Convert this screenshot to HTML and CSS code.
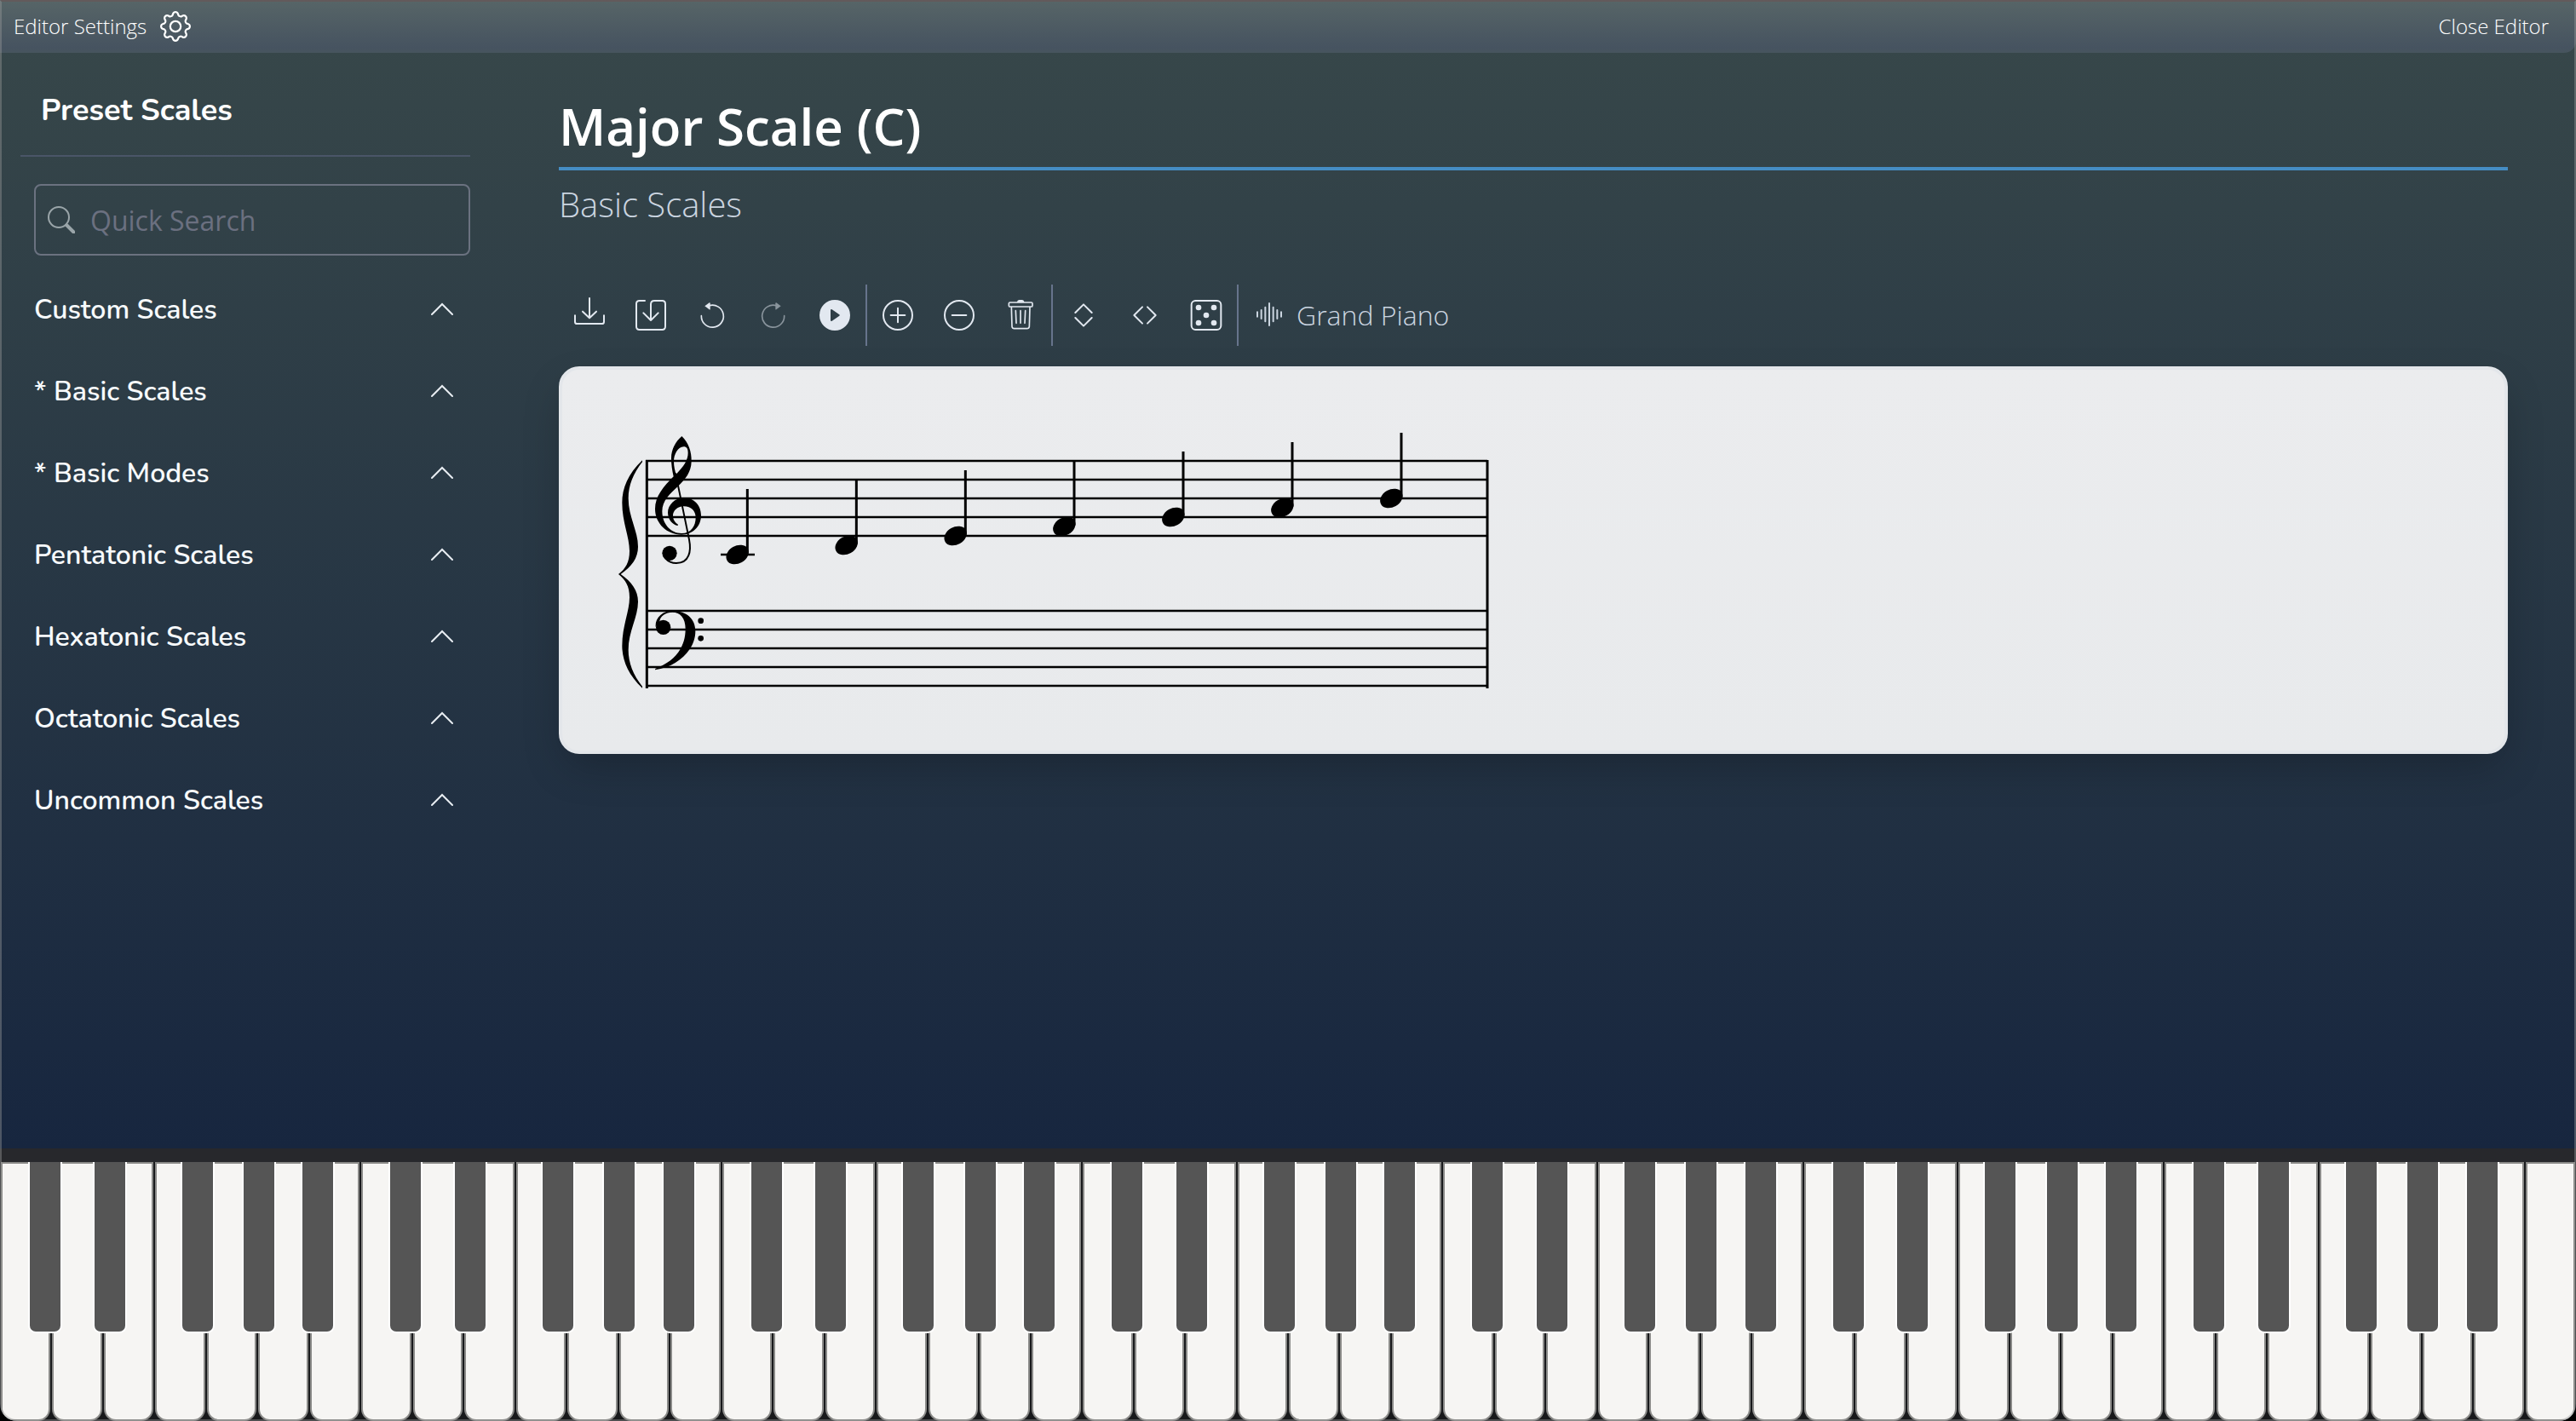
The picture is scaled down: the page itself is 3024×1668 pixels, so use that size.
FILE: index.html
```html
<!DOCTYPE html>
<html lang="en">
<head>
<meta charset="utf-8">
<title>Scale Editor</title>
<link rel="stylesheet" href="styles.css">
</head>
<body>
<div class="app">
  <header class="topbar">
    <button class="topbar-btn" type="button">
      <span>Editor Settings</span>
      <svg class="gear" viewBox="0 0 16 16" aria-hidden="true"><path d="M8 4.754a3.246 3.246 0 1 0 0 6.492 3.246 3.246 0 0 0 0-6.492zM5.754 8a2.246 2.246 0 1 1 4.492 0 2.246 2.246 0 0 1-4.492 0z"/><path d="M9.796 1.343c-.527-1.79-3.065-1.79-3.592 0l-.094.319a.873.873 0 0 1-1.255.52l-.292-.16c-1.64-.892-3.433.902-2.54 2.541l.159.292a.873.873 0 0 1-.52 1.255l-.319.094c-1.79.527-1.79 3.065 0 3.592l.319.094a.873.873 0 0 1 .52 1.255l-.16.292c-.892 1.64.901 3.434 2.541 2.54l.292-.159a.873.873 0 0 1 1.255.52l.094.319c.527 1.79 3.065 1.79 3.592 0l.094-.319a.873.873 0 0 1 1.255-.52l.292.16c1.64.893 3.434-.902 2.54-2.541l-.159-.292a.873.873 0 0 1 .52-1.255l.319-.094c1.79-.527 1.79-3.065 0-3.592l-.319-.094a.873.873 0 0 1-.52-1.255l.16-.292c.893-1.64-.902-3.433-2.541-2.54l-.292.159a.873.873 0 0 1-1.255-.52l-.094-.319zm-2.633.283c.246-.835 1.428-.835 1.674 0l.094.319a1.873 1.873 0 0 0 2.693 1.115l.291-.16c.764-.415 1.6.42 1.184 1.185l-.159.292a1.873 1.873 0 0 0 1.116 2.692l.318.094c.835.246.835 1.428 0 1.674l-.319.094a1.873 1.873 0 0 0-1.115 2.693l.16.291c.415.764-.42 1.6-1.185 1.184l-.291-.159a1.873 1.873 0 0 0-2.693 1.116l-.094.318c-.246.835-1.428.835-1.674 0l-.094-.319a1.873 1.873 0 0 0-2.692-1.115l-.292.16c-.764.415-1.6-.42-1.184-1.185l.159-.291A1.873 1.873 0 0 0 1.945 8.93l-.319-.094c-.835-.246-.835-1.428 0-1.674l.319-.094A1.873 1.873 0 0 0 3.06 4.377l-.16-.292c-.415-.764.42-1.6 1.185-1.184l.292.159a1.873 1.873 0 0 0 2.692-1.115l.094-.319z"/></svg>
    </button>
    <button class="topbar-btn" type="button">Close Editor</button>
  </header>

  <div class="workspace">
    <aside class="sidebar">
      <h2 class="sidebar-title">Preset Scales</h2>
      <div class="search">
        <svg class="search-icon" viewBox="0 0 32 32" aria-hidden="true"><circle cx="13" cy="13" r="12"/><path class="handle" d="M22.500 22.500L30.500 30.500"/></svg>
        <input class="search-input" type="search" placeholder="Quick Search" aria-label="Quick Search">
      </div>
      <nav class="groups" aria-label="Preset scales">
        <button class="group" type="button">Custom Scales<svg class="chevron" viewBox="0 0 26 16" aria-hidden="true"><path d="M1 14L13 2L25 14"/></svg></button>
        <button class="group" type="button">* Basic Scales<svg class="chevron" viewBox="0 0 26 16" aria-hidden="true"><path d="M1 14L13 2L25 14"/></svg></button>
        <button class="group" type="button">* Basic Modes<svg class="chevron" viewBox="0 0 26 16" aria-hidden="true"><path d="M1 14L13 2L25 14"/></svg></button>
        <button class="group" type="button">Pentatonic Scales<svg class="chevron" viewBox="0 0 26 16" aria-hidden="true"><path d="M1 14L13 2L25 14"/></svg></button>
        <button class="group" type="button">Hexatonic Scales<svg class="chevron" viewBox="0 0 26 16" aria-hidden="true"><path d="M1 14L13 2L25 14"/></svg></button>
        <button class="group" type="button">Octatonic Scales<svg class="chevron" viewBox="0 0 26 16" aria-hidden="true"><path d="M1 14L13 2L25 14"/></svg></button>
        <button class="group" type="button">Uncommon Scales<svg class="chevron" viewBox="0 0 26 16" aria-hidden="true"><path d="M1 14L13 2L25 14"/></svg></button>
      </nav>
    </aside>

    <main class="editor">
      <h1 class="title">Major Scale (C)</h1>
      <p class="subtitle">Basic Scales</p>

      <div class="toolbar" role="toolbar" aria-label="Score tools">
        <button class="tool" type="button" aria-label="Download"><svg viewBox="0 0 216 216"><path d="M108 48V117M84 95L108 118L132 95M57 109V131Q57 138 64 138H152Q159 138 159 131V109"/></svg></button>
        <button class="tool" type="button" aria-label="Import"><svg viewBox="0 0 216 216"><path d="M87 57H68Q57 57 57 68V148Q57 159 68 159H148Q159 159 159 148V68Q159 57 148 57H121Q108 57 108 70V126M82 100L108 126L134 100"/></svg></button>
        <button class="tool" type="button" aria-label="Undo"><svg viewBox="0 0 216 216"><path class="thin" d="M70 110A39 39 0 1 0 98 74"/><path class="solid" d="M82 76L98 64Q101 63 101 67V86Q101 90 98 88Z"/></svg></button>
        <button class="tool" type="button" aria-label="Redo" disabled><svg viewBox="0 0 216 216"><path class="thin" d="M146 110A39 39 0 1 1 118 74"/><path class="solid" d="M134 76L118 64Q115 63 115 67V86Q115 90 118 88Z"/></svg></button>
        <button class="tool" type="button" aria-label="Play"><svg viewBox="0 0 216 216"><path class="solid" fill-rule="evenodd" d="M108 54A54 54 0 1 1 108 162A54 54 0 1 1 108 54ZM93 90V126Q94 130 98 128L124 110Q127 108 124 106L98 88Q94 86 93 90Z"/></svg></button>
        <span class="divider"></span>
        <button class="tool" type="button" aria-label="Add note"><svg viewBox="0 0 216 216"><circle cx="108" cy="108" r="51"/><path d="M108 83V133M83 108H133"/></svg></button>
        <button class="tool" type="button" aria-label="Remove note"><svg viewBox="0 0 216 216"><circle cx="108" cy="108" r="51"/><path d="M83 108H133"/></svg></button>
        <button class="tool" type="button" aria-label="Delete all"><svg viewBox="0 0 216 216"><path class="thin" d="M71 63H146Q150 63 150 67V74Q150 78 146 78H71Q67 78 67 74V67Q67 63 71 63ZM76 79L78 148Q79 155 86 155H131Q138 155 139 148L141 79M91 92L93 136M108 92V136M125 92L123 136"/><path class="solid" d="M95 63Q97 54 103 54H114Q120 54 122 63Z"/></svg></button>
        <span class="divider"></span>
        <button class="tool" type="button" aria-label="Expand vertically"><svg viewBox="0 0 216 216"><path d="M79 99L108 70L137 99M79 117L108 146L137 117"/></svg></button>
        <button class="tool" type="button" aria-label="Expand horizontally"><svg viewBox="0 0 216 216"><path d="M99 79L70 108L99 137M117 79L146 108L117 137"/></svg></button>
        <button class="tool" type="button" aria-label="Randomize"><svg viewBox="0 0 216 216"><rect x="56" y="57" width="104" height="102" rx="14"/><g class="solid"><circle cx="81" cy="81" r="10"/><circle cx="135" cy="81" r="10"/><circle cx="108" cy="108" r="10"/><circle cx="81" cy="135" r="10"/><circle cx="135" cy="135" r="10"/></g></svg></button>
        <span class="divider"></span>
        <button class="instrument" type="button"><svg viewBox="0 0 96 96" aria-hidden="true"><path d="M6 40V56M20 33V63M34 23V73M48 9V87M62 23V73M76 33V63M90 40V56"/></svg><span>Grand Piano</span></button>
      </div>

      <section class="score" aria-label="Score">
        <svg class="staff" viewBox="0 0 3240 1020" role="img" aria-label="C major scale on a grand staff">
          <defs>
            <g id="note"><ellipse rx="42" ry="31" transform="rotate(-30)"/><path class="stem" d="M35 -4V-231"/></g>
            <path id="brace" d="M162 151C112 198 91 250 91 300C91 370 117 420 117 470C117 510 103 532 78 552L86 552C125 524 147 495 147 455C147 400 113 350 113 285C113 240 130 197 162 157Z"/>
          </defs>
          <path class="line" d="M174 153H3138M174 219H3138M174 285H3138M174 351H3138M174 417H3138M174 681H3138M174 747H3138M174 813H3138M174 879H3138M174 945H3138M438 483H558"/>
          <path class="bar" d="M178 150V954M3138 150V954"/>
          <use href="#brace"/>
          <use href="#brace" transform="translate(0 1104) scale(1 -1)"/>
          <path d="M301 66C325 90 336 120 335 155C334 192 315 216 288 242C260 268 232 292 232 330C232 375 262 408 300 408C335 408 350 380 350 353C350 330 335 313 308 313C285 313 270 330 270 345C270 360 277 370 288 377L287 381C268 378 252 358 252 335C252 308 278 283 308 283C345 283 369 310 369 345C369 385 338 413 300 413C250 413 207 375 207 322C207 278 237 243 272 208C267 185 264 165 264 143C264 112 280 84 301 66ZM281 200C308 172 323 150 323 125C323 110 318 103 308 103C288 103 273 130 273 155C273 172 277 187 281 200Z" fill-rule="evenodd"/>
          <path class="hook" d="M279 196L327 430C335 470 328 513 282 513C264 513 252 506 243 496"/>
          <circle cx="258" cy="478" r="26"/>
          <path d="M209 738C206 705 234 681 268 681C318 681 349 710 349 752C349 820 285 878 207 889C207 886 207 886 209 884C272 860 314 815 314 745C314 706 296 686 268 686C245 686 225 699 223 717Z"/>
          <circle cx="236" cy="739" r="26"/>
          <circle cx="368" cy="716" r="10"/>
          <circle cx="368" cy="778" r="10"/>
          <use href="#note" x="497" y="483"/>
          <use href="#note" x="881" y="450"/>
          <use href="#note" x="1265" y="417"/>
          <use href="#note" x="1648" y="384"/>
          <use href="#note" x="2032" y="351"/>
          <use href="#note" x="2416" y="318"/>
          <use href="#note" x="2800" y="285"/>
        </svg>
      </section>
    </main>
  </div>

  <div class="piano" id="piano" aria-label="Piano keyboard"></div>
</div>
<script src="piano.js"></script>
</body>
</html>
```
FILE: styles.css
```css
* {
  box-sizing: border-box;
}

html {
  background: #000;
}

body {
  margin: 0;
  font-family: "Open Sans", "Noto Sans", sans-serif;
  color: #fff;
}

button {
  margin: 0;
  padding: 0;
  border: 0;
  background: none;
  color: inherit;
  font: inherit;
}

svg {
  display: block;
}

.app {
  position: relative;
  display: flex;
  flex-direction: column;
  min-height: 100vh;
  overflow: hidden;
  border-radius: 0 0 20px 20px;
  background: linear-gradient(#38484a, #17263f 1348px);
}

/* thin translucent window frame */
.app::after {
  content: "";
  position: absolute;
  inset: 0;
  border: 2px solid rgba(160, 160, 160, 0.4);
  border-top-color: rgba(112, 80, 80, 0.5);
  border-radius: 0 0 20px 20px;
  pointer-events: none;
}

.topbar {
  display: flex;
  justify-content: space-between;
  align-items: center;
  height: 62px;
  padding: 0 32px 0 16px;
  border-radius: 0 0 14px 0;
  background: linear-gradient(#576567, #465360 56px, #47555e);
  font-size: 24px;
  font-weight: 300;
  line-height: 32px;
}

.topbar-btn {
  display: flex;
  align-items: center;
  gap: 16px;
}

.gear {
  width: 36px;
  height: 36px;
  fill: #fff;
}

.workspace {
  display: flex;
  flex: 1;
}

.sidebar {
  flex: none;
  width: 552px;
  padding: 36px 0 0 24px;
}

.sidebar-title {
  margin: 0;
  padding: 8px 24px 28px;
  border-bottom: 2px solid #4a5568;
  font-family: Nunito, Lato, sans-serif;
  font-size: 36px;
  font-weight: 700;
  line-height: 48px;
}

.search {
  display: flex;
  align-items: center;
  gap: 18px;
  height: 84px;
  margin: 32px 0 0 16px;
  padding: 0 14px;
  border: 2px solid #6b7280;
  border-radius: 8px;
}

.search-icon {
  flex: none;
  width: 32px;
  height: 32px;
  fill: none;
  stroke: #9aa5a9;
  stroke-width: 2;
}

.search-icon .handle {
  stroke-width: 4;
  stroke-linecap: round;
}

.search-input {
  flex: 1;
  min-width: 0;
  padding: 0;
  border: 0;
  outline: 0;
  background: none;
  color: #fff;
  font: inherit;
  font-size: 32px;
}

.search-input::placeholder {
  color: #6b7080;
  opacity: 1;
}

.groups {
  display: flex;
  flex-direction: column;
  padding: 15px 20px 0 16px;
}

.group {
  display: flex;
  justify-content: space-between;
  align-items: center;
  height: 96px;
  font-family: Nunito, Lato, sans-serif;
  font-size: 32px;
  font-weight: 600;
  color: #f7fafc;
}

.chevron {
  width: 26px;
  height: 16px;
  fill: none;
  stroke: #e8edf2;
  stroke-width: 2;
  stroke-linecap: round;
}

.editor {
  flex: 1;
  min-width: 0;
  padding: 46px 80px 0 104px;
}

.title {
  margin: 0;
  padding-bottom: 8px;
  border-bottom: 4px solid #458dc4;
  font-size: 60px;
  font-weight: 600;
  line-height: 80px;
}

.subtitle {
  margin: 12px 0 0;
  color: #cbd5e0;
  font-size: 40px;
  font-weight: 300;
  line-height: 56px;
}

.toolbar {
  display: flex;
  height: 72px;
  margin: 66px 0 24px;
}

.tool svg {
  width: 72px;
  height: 72px;
  fill: none;
  stroke: #e2e8f0;
  stroke-width: 6;
  stroke-linecap: round;
  stroke-linejoin: round;
}

.tool .thin {
  stroke-width: 5;
}

.tool .solid {
  fill: #e2e8f0;
  stroke: none;
}

.tool:disabled {
  opacity: 0.5;
}

.divider {
  width: 2px;
  background: #67748c;
}

.instrument {
  display: flex;
  align-items: center;
  gap: 16px;
  padding: 0 20px 2px;
  color: #cbd5e0;
  font-size: 32px;
  font-weight: 300;
}

.instrument svg {
  width: 32px;
  height: 32px;
  stroke: #cbd5e0;
  stroke-width: 6;
  stroke-linecap: round;
}

.score {
  padding: 56px 40px 51px;
  border: 4px solid #e3e6ea;
  border-radius: 24px;
  background: linear-gradient(#ebecee, #e8eaec);
  box-shadow: 0 20px 50px -10px rgba(0, 0, 0, 0.25);
}

.staff {
  width: 1080px;
  height: 340px;
}

.staff .line {
  stroke: #000;
  stroke-width: 7;
}

.staff .bar {
  stroke: #000;
  stroke-width: 9;
}

.staff .stem {
  stroke: #000;
  stroke-width: 9;
}

.staff .hook {
  fill: none;
  stroke: #000;
  stroke-width: 6;
}

/* keyboard: seven octaves and a closing C, all white keys equally wide */
.piano {
  display: grid;
  grid-template-columns: repeat(7, minmax(0, 7fr)) minmax(0, 1fr);
  height: 320px;
  border-top: 16px solid #27282c;
  background: #18191b;
}

.octave {
  position: relative;
  display: grid;
  grid-template-columns: repeat(7, minmax(0, 1fr));
}

.white {
  margin: 0 1px;
  border: 2px solid #8a8a88;
  border-radius: 0 0 14px 14px;
  background: #f6f5f3;
}

.black {
  position: absolute;
  top: 0;
  width: 40px;
  height: 201px;
  border: 2px solid #fff;
  border-top: 0;
  border-radius: 0 0 9px 9px;
  background: #555;
  transform: translateX(-50%);
}
```
FILE: piano.js
```js
const piano = document.getElementById("piano");
const whiteNames = ["C", "D", "E", "F", "G", "A", "B"];
// centre of each black key, as a share of the octave's width
const blackKeys = [["C#", 12.5], ["D#", 30.4], ["F#", 54.7], ["G#", 71.8], ["A#", 88.2]];

function addKey(parent, kind, name) {
  const key = document.createElement("button");
  key.type = "button";
  key.className = kind;
  key.setAttribute("aria-label", name);
  parent.append(key);
  return key;
}

for (let octave = 1; octave <= 7; octave++) {
  const group = document.createElement("div");
  group.className = "octave";
  whiteNames.forEach((name) => addKey(group, "white", name + octave));
  blackKeys.forEach(([name, centre]) => {
    addKey(group, "black", name + octave).style.left = centre + "%";
  });
  piano.append(group);
}
addKey(piano, "white", "C8");
```
